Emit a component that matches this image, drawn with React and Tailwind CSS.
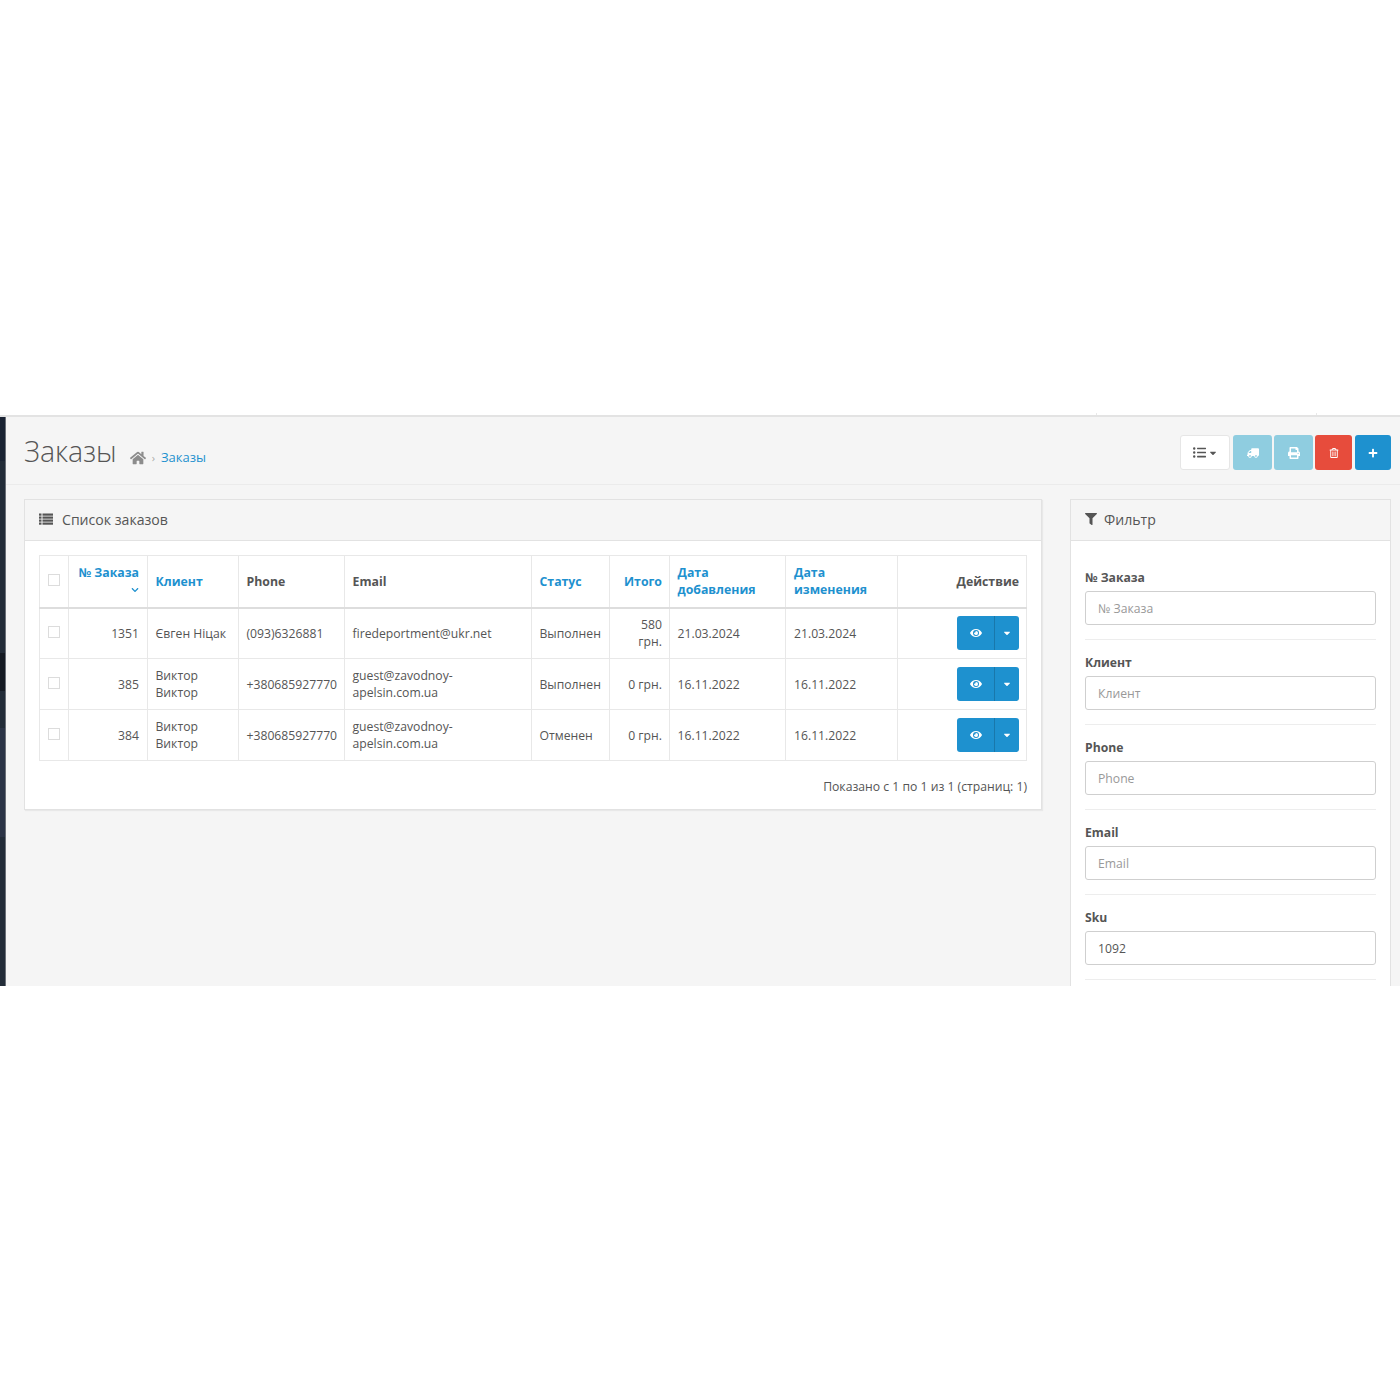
import React from "react";
import { FaHome, FaListUl, FaTruck, FaPrint, FaRegTrashAlt, FaPlus, FaFilter, FaEye, FaCaretDown, FaChevronDown } from "react-icons/fa";

const rows = [
  { id: "1351", client: "Євген Ніцак", phone: "(093)6326881", email: "firedeportment@ukr.net", status: "Выполнен", total: "580 грн.", added: "21.03.2024", changed: "21.03.2024" },
  { id: "385", client: "Виктор Виктор", phone: "+380685927770", email: "guest@zavodnoy-apelsin.com.ua", status: "Выполнен", total: "0 грн.", added: "16.11.2022", changed: "16.11.2022" },
  { id: "384", client: "Виктор Виктор", phone: "+380685927770", email: "guest@zavodnoy-apelsin.com.ua", status: "Отменен", total: "0 грн.", added: "16.11.2022", changed: "16.11.2022" },
];

const filters = [
  { label: "№ Заказа", placeholder: "№ Заказа" },
  { label: "Клиент", placeholder: "Клиент" },
  { label: "Phone", placeholder: "Phone" },
  { label: "Email", placeholder: "Email" },
  { label: "Sku", value: "1092" },
];

const navItems = [
  { h: 45, c: "bg-[#1a2333]" },
  { h: 37, c: "bg-[#222c38]" },
  { h: 39, c: "bg-[#222c38]" },
  { h: 39, c: "bg-[#222c38]" },
  { h: 38, c: "bg-[#222c38]" },
  { h: 39, c: "bg-[#222c38]" },
  { h: 38, c: "bg-[#141a23]" },
  { h: 37, c: "bg-[#222c38]" },
  { h: 109, c: "bg-[#2b3446]" },
  { h: 40, c: "bg-[#222c38]" },
  { h: 37, c: "bg-[#222c38]" },
  { h: 39, c: "bg-[#222c38]" },
  { h: 33, c: "bg-[#222c38]" },
];

const td = "border border-[#e8e8e8] pl-[7.5px] pr-[8px] py-0 align-middle";
const th = "border border-[#e8e8e8] border-b-2 border-b-[#dddddd] pl-[7.5px] pr-[8px] py-0 align-middle font-bold text-[12.3px]";

function Check({ className = "" }) {
  return <span className={`block w-[12px] h-[12px] bg-white border border-[#dcdcdc] mx-auto ${className}`} />;
}

function ListIcon() {
  return (
    <svg width="14" height="12" viewBox="0 0 14 12" className="mr-[9px] shrink-0" fill="currentColor">
      <rect x="0" y="0.5" width="2.5" height="2.2" /><rect x="3.5" y="0.5" width="10.5" height="2.2" />
      <rect x="0" y="3.5" width="2.5" height="2.2" /><rect x="3.5" y="3.5" width="10.5" height="2.2" />
      <rect x="0" y="6.5" width="2.5" height="2.2" /><rect x="3.5" y="6.5" width="10.5" height="2.2" />
      <rect x="0" y="9.5" width="2.5" height="2.2" /><rect x="3.5" y="9.5" width="10.5" height="2.2" />
    </svg>
  );
}

export default function App() {
  return (
    <div className="bg-white min-h-[1400px] text-[12.2px] leading-[17px] text-[#555555]" style={{ fontFamily: '"Open Sans", "Noto Sans", sans-serif' }}>
      <div className="h-[415px] bg-white flex items-end">
        <span className="ml-[1096px] w-px h-[2px] bg-[#e8e8e8]" />
        <span className="ml-[219px] w-px h-[2px] bg-[#e8e8e8]" />
      </div>
      <div className="h-[571px] flex overflow-hidden bg-[#f5f5f5] border-t-2 border-[#e3e3e3]">
        <div className="w-[6px] shrink-0 flex flex-col border-r border-[#6b7078] -mt-[1px]">
          {navItems.map((n, i) => (
            <div key={i} className={`${n.c} shrink-0`} style={{ height: n.h }} />
          ))}
        </div>
        <div className="flex-1 min-w-0">
          <div className="h-[68px] border-b border-[#ebebeb] flex items-start justify-between pl-[18px] pr-[9px]">
            <div className="flex items-baseline pt-[14px]">
              <h1 className="text-[28.5px] leading-[40px] font-light text-[#555555]">Заказы</h1>
              <FaHome className="ml-[13px] text-[16px] text-[#8c8c8c] self-end mb-[5px]" />
              <span className="mx-[6px] text-[11px] text-[#aaaaaa]">›</span>
              <a className="text-[#1e91cf] text-[13px]">Заказы</a>
            </div>
            <div className="flex pt-[18px]">
              <button className="w-[50px] h-[35px] bg-white border border-[#e6e6e6] rounded-[3px] flex items-center justify-center text-[#555555]">
                <FaListUl className="text-[13px]" /><FaCaretDown className="text-[10px] ml-[2px]" />
              </button>
              <button className="ml-[3px] w-[39px] h-[35px] bg-[#8fcde0] rounded-[3px] flex items-center justify-center text-white"><FaTruck className="text-[12px] -scale-x-100" /></button>
              <button className="ml-[2px] w-[39px] h-[35px] bg-[#8fcde0] rounded-[3px] flex items-center justify-center text-white"><FaPrint className="text-[12px]" /></button>
              <button className="ml-[2px] w-[37px] h-[35px] bg-[#e74c3c] rounded-[3px] flex items-center justify-center text-white"><FaRegTrashAlt className="text-[10px]" /></button>
              <button className="ml-[3px] w-[36px] h-[35px] bg-[#1e91cf] rounded-[3px] flex items-center justify-center text-white"><FaPlus className="text-[10px]" /></button>
            </div>
          </div>
          <div className="flex items-start pl-[18px] pr-[9px] pt-[14px]">
            <section className="w-[1018px] h-[311px] shrink-0 bg-white border border-[#e2e2e2] shadow-[1px_1px_1px_rgba(0,0,0,0.05)]">
              <div className="h-[41px] bg-[#f5f5f5] border-b border-[#e2e2e2] flex items-center pl-[14px] pb-[2px] text-[14.1px] text-[#555555]">
                <ListIcon /><span>Список заказов</span>
              </div>
              <div className="pt-[14px] px-[14px]">
                <table className="table-fixed border-collapse w-[987px]">
                  <colgroup>
                    <col className="w-[29px]" /><col className="w-[79px]" /><col className="w-[91px]" /><col className="w-[106px]" />
                    <col className="w-[187px]" /><col className="w-[78px]" /><col className="w-[60px]" /><col className="w-[116px]" />
                    <col className="w-[112px]" /><col className="w-[129px]" />
                  </colgroup>
                  <thead>
                    <tr className="h-[52px]">
                      <th className={th}><Check className="-mt-[2px]" /></th>
                      <th className={`${th} text-right text-[#1e91cf]`}>№ Заказа<span className="flex h-[17px] items-center justify-end"><FaChevronDown className="text-[8px]" /></span></th>
                      <th className={`${th} text-left text-[#1e91cf]`}>Клиент</th>
                      <th className={`${th} text-left`}>Phone</th>
                      <th className={`${th} text-left`}>Email</th>
                      <th className={`${th} text-left text-[#1e91cf]`}>Статус</th>
                      <th className={`${th} !pr-[7px] text-right text-[#1e91cf]`}>Итого</th>
                      <th className={`${th} text-left text-[#1e91cf]`}>Дата добавления</th>
                      <th className={`${th} !pl-[8px] text-left text-[#1e91cf]`}>Дата изменения</th>
                      <th className={`${th} !pr-[7px] text-right`}>Действие</th>
                    </tr>
                  </thead>
                  <tbody>
                    {rows.map((r) => (
                      <tr key={r.id} className="h-[51px]">
                        <td className={td}><Check className="-mt-[2px]" /></td>
                        <td className={`${td} text-right`}>{r.id}</td>
                        <td className={td}>{r.client}</td>
                        <td className={td}>{r.phone}</td>
                        <td className={td}>{r.email.includes("-") ? <>guest@zavodnoy-<br />apelsin.com.ua</> : r.email}</td>
                        <td className={td}>{r.status}</td>
                        <td className={`${td} !pr-[7px] text-right`}>{r.total}</td>
                        <td className={td}>{r.added}</td>
                        <td className={`${td} !pl-[8px]`}>{r.changed}</td>
                        <td className={`${td} !pr-[7px]`}>
                          <div className="flex justify-end">
                            <button className="w-[38px] h-[34px] bg-[#1e91cf] rounded-l-[3px] border-r border-[#1978ab] flex items-center justify-center text-white"><FaEye className="text-[12px]" /></button>
                            <button className="w-[24px] h-[34px] bg-[#1e91cf] rounded-r-[3px] flex items-center justify-center text-white"><FaCaretDown className="text-[10px]" /></button>
                          </div>
                        </td>
                      </tr>
                    ))}
                  </tbody>
                </table>
                <p className="mt-[17px] text-right">Показано с 1 по 1 из 1 (страниц: 1)</p>
              </div>
            </section>
            <aside className="ml-[28px] w-[321px] shrink-0 bg-white border border-[#e2e2e2]">
              <div className="h-[41px] bg-[#f5f5f5] border-b border-[#e2e2e2] flex items-center pl-[14px] pb-[2px] text-[14.1px] text-[#555555]">
                <FaFilter className="text-[12px] mr-[7px]" />Фильтр
              </div>
              <div className="px-[14px] pt-[28px]">
                {filters.map((f) => (
                  <div key={f.label} className="pb-[14px] mb-[14px] border-b border-[#ededed]">
                    <label className="block font-bold leading-[17px] mb-[5px] text-[#555555]">{f.label}</label>
                    <input readOnly placeholder={f.placeholder} value={f.value ?? ""} className="block w-[291px] h-[34px] bg-white border border-[#cfcfcf] rounded-[3px] px-[12px] text-[12.2px] text-[#555555] placeholder:text-[#999999]" />
                  </div>
                ))}
              </div>
            </aside>
          </div>
        </div>
      </div>
    </div>
  );
}
